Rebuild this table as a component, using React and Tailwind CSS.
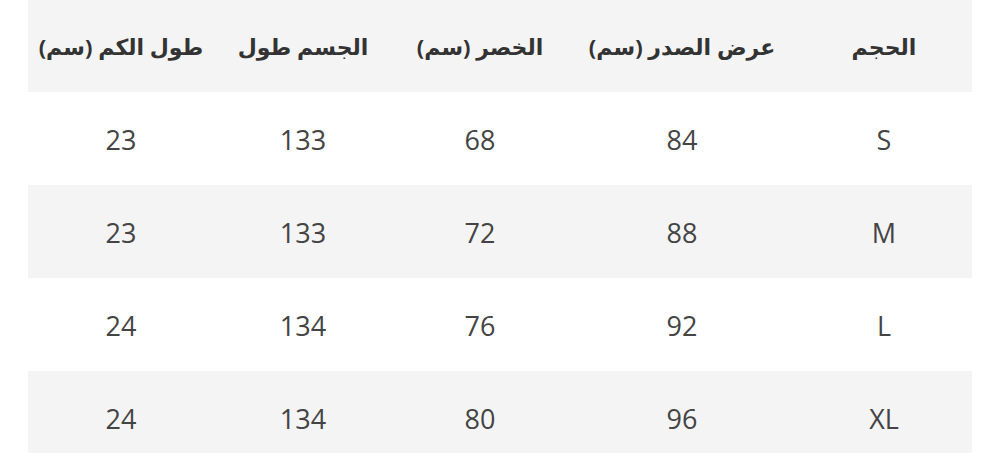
const headers = ['الحجم', 'عرض الصدر (سم)', 'الخصر (سم)', 'الجسم طول', 'طول الكم (سم)'];

const rows = [
    ['S', '84', '68', '133', '23'],
    ['M', '88', '72', '133', '23'],
    ['L', '92', '76', '134', '24'],
    ['XL', '96', '80', '134', '24'],
];

const gridCols = 'grid grid-cols-[176px_228px_176px_178px_186px]';

export default function App() {
    return (
        <div className="min-h-screen bg-white px-[28px]" style={{ fontFamily: '"Open Sans", "DejaVu Sans", sans-serif' }}>
            <div dir="rtl" className="w-[944px]">
                <div className={`${gridCols} h-[92px] items-center bg-[#f4f4f4]`}>
                    {headers.map((h) => (
                        <div key={h} className="text-center text-[22px] font-bold text-[#333]">
                            {h}
                        </div>
                    ))}
                </div>
                {rows.map((row, i) => (
                    <div
                        key={row[0]}
                        className={`${gridCols} h-[93px] items-center ${i % 2 === 1 ? 'bg-[#f4f4f4]' : 'bg-white'}`}
                    >
                        {row.map((cell, j) => (
                            <div key={j} className="pt-[3px] text-center text-[27px] text-[#444]">
                                {cell}
                            </div>
                        ))}
                    </div>
                ))}
            </div>
        </div>
    );
}
